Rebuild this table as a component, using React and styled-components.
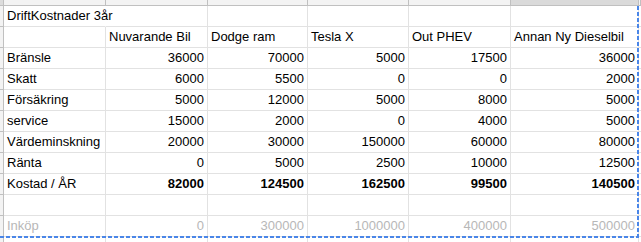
import React from "react";
import styled, { createGlobalStyle } from "styled-components";

const Global = createGlobalStyle`
  html, body {
    margin: 0;
    padding: 0;
    background: #fff;
    overflow: hidden;
  }
`;

const rows = [
  { cells: ["DriftKostnader 3år", "", "", "", "", ""], overflow: true },
  { cells: ["", "Nuvarande Bil", "Dodge ram", "Tesla X", "Out PHEV", "Annan Ny Dieselbil"] },
  { cells: ["Bränsle", 36000, 70000, 5000, 17500, 36000] },
  { cells: ["Skatt", 6000, 5500, 0, 0, 2000] },
  { cells: ["Försäkring", 5000, 12000, 5000, 8000, 5000] },
  { cells: ["service", 15000, 2000, 0, 4000, 5000] },
  { cells: ["Värdeminskning", 20000, 30000, 150000, 60000, 80000] },
  { cells: ["Ränta", 0, 5000, 2500, 10000, 12500] },
  { cells: ["Kostad / ÅR", 82000, 124500, 162500, 99500, 140500], bold: true },
  { cells: ["", "", "", "", "", ""] },
  { cells: ["Inköp", 0, 300000, 1000000, 400000, 500000], muted: true },
  { cells: ["", "", "", "", "", ""] },
];

const Sheet = styled.div`
  position: relative;
  display: grid;
  grid-template-columns: 4px 102px 102px 100px 101px 102px 128px 2px;
  grid-template-rows: 6px repeat(12, 21px);
  width: 641px;
  height: 242px;
  overflow: hidden;
  font-family: "Liberation Sans", Arial, sans-serif;
  font-size: 13px;
  color: #000;
`;

const Corner = styled.div`
  background: #dcdcdc;
  border-right: 1px solid #c0c0c0;
  border-bottom: 1px solid #c0c0c0;
  box-sizing: border-box;
`;

const ColHead = styled.div`
  background: ${(p) => (p.$active ? "#dadada" : "#f3f3f3")};
  border-right: 1px solid #c0c0c0;
  border-bottom: 1px solid #c0c0c0;
  box-sizing: border-box;
`;

const RowHead = styled.div`
  background: #f3f3f3;
  border-right: 1px solid #c0c0c0;
  border-bottom: 1px solid #c0c0c0;
  box-sizing: border-box;
`;

const Cell = styled.div`
  box-sizing: border-box;
  border-right: 1px solid ${(p) => (p.$overflow ? "transparent" : "#e2e2e2")};
  border-bottom: 1px solid #e2e2e2;
  padding: 0 3px;
  line-height: 20px;
  white-space: nowrap;
  overflow: ${(p) => (p.$overflow ? "visible" : "hidden")};
  text-align: ${(p) => (p.$num ? "right" : "left")};
  font-weight: ${(p) => (p.$bold ? "bold" : "normal")};
  color: ${(p) => (p.$muted ? "#b7b7b7" : "#000")};
`;

const CopyRange = styled.div`
  position: absolute;
  left: 0;
  top: 6px;
  width: 639px;
  height: 232px;
  pointer-events: none;
  background:
    repeating-linear-gradient(to bottom, #4a86e8 0 4px, transparent 4px 6px) right top / 2px 100% no-repeat,
    repeating-linear-gradient(to right, #4a86e8 0 4px, transparent 4px 6px) left bottom / 100% 2px no-repeat;
`;

export default function App() {
  return (
    <>
      <Global />
      <Sheet>
        <Corner />
        {[0, 1, 2, 3, 4, 5].map((i) => (
          <ColHead key={i} $active={i === 5} />
        ))}
        <ColHead />
        {rows.map((row, r) => (
          <React.Fragment key={r}>
            <RowHead />
            {row.cells.map((v, c) => {
              const num = typeof v === "number";
              return (
                <Cell
                  key={c}
                  $num={num}
                  $bold={row.bold && num}
                  $muted={row.muted}
                  $overflow={row.overflow && c === 0}
                >
                  {num ? String(v) : v}
                </Cell>
              );
            })}
            <Cell />
          </React.Fragment>
        ))}
        <CopyRange />
      </Sheet>
    </>
  );
}
